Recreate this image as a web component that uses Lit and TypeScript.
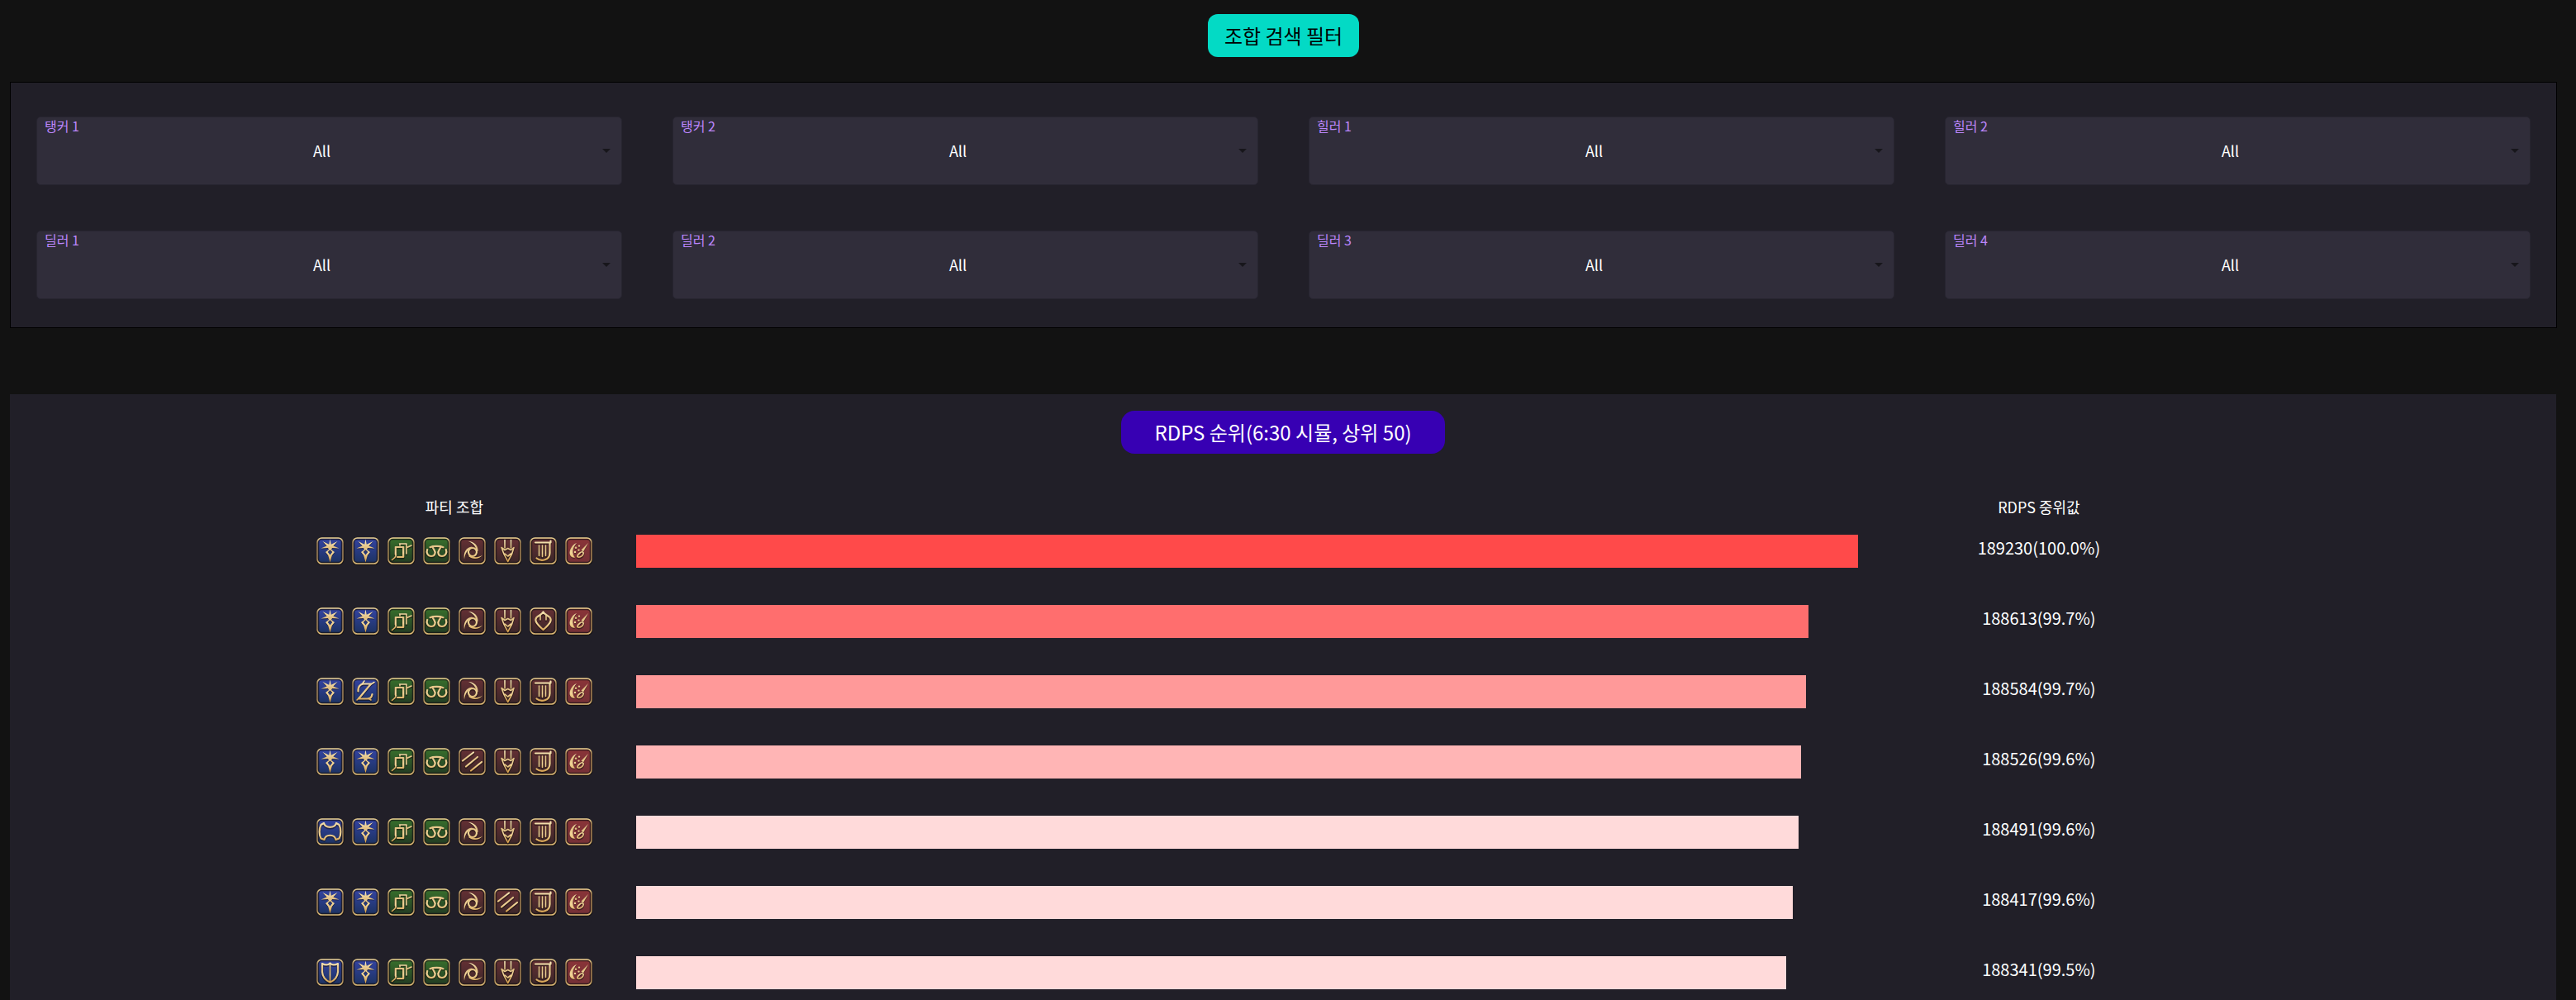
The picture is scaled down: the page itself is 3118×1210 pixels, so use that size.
import { LitElement, html, svg, css } from "lit";
import { customElement, property } from "lit/decorators.js";

type Role = "tank" | "healer" | "dps" | "caster";

const ROLE_COLORS: Record<Role, [string, string]> = {
  tank: ["#3444a4", "#1c3260"],
  healer: ["#38702c", "#223a22"],
  dps: ["#663034", "#3a2628"],
  caster: ["#8a3438", "#743036"],
};

/* Glyph shapes on a 33-unit grid: `line` is stroked, `thin` is stroked finer, `fill` is solid. */
const JOBS: Record<string, { role: Role; name: string; line?: string; thin?: string; fill?: string }> = {
  drk: {
    role: "tank",
    name: "암흑기사",
    fill: "M16.5 2.5L17.8 8.8L25.5 5L20.4 10.6L27.5 13.6L19 13L18 15L22 18L18.8 22L16.5 30.5L14.2 22L11 18L15 15L14 13L5.5 13.6L12.6 10.6L7.5 5L15.2 8.8ZM16.5 15.2L13.8 18L16.5 21.4L19.2 18Z",
  },
  gnb: {
    role: "tank",
    name: "건브레이커",
    line: "M7.5 16.5C7 11 10.5 7 15 7.5H23L8 25.5H19C22 25.5 24 23 24.5 20",
    thin: "M12 8L15 4M22 8.5L27 5.5M6 27L9 24M20 25L23 27",
  },
  war: {
    role: "tank",
    name: "전사",
    line: "M5.5 8L9 6C11 12.5 22 12.5 24 6L27.5 8C30 13 30 20 27.5 24.5L23.5 26C22 19 11 19 9.5 26L5.5 24.5C3 20 3 13 5.5 8Z",
  },
  pld: {
    role: "tank",
    name: "나이트",
    line: "M7 6V16C7.5 22 11.5 26.5 16.5 28.5C21.5 26.5 25.5 22 26 16V6C22 8 19 8 16.5 5.5C14 8 11 8 7 6Z",
    thin: "M16.5 6V27",
  },
  sch: {
    role: "healer",
    name: "현자",
    line: "M9.8 21V12H19.2V24H12",
    thin: "M14.5 8H23V20M23.5 12.5L29 10M5.5 27.5L9 24.5L10.5 21.5M15 8V10",
  },
  ast: {
    role: "healer",
    name: "점성술사",
    line: "M5.2 15C3.5 19 6 23 10 23C14.5 23 15.8 18.5 13.5 15.5L11.5 12M8.5 12.2C12 10.4 21 10.4 24.5 12.2M27.8 15C29.5 19 27 23 23 23C18.5 23 17.2 18.5 19.5 15.5L21.5 12",
  },
  nin: {
    role: "dps",
    name: "닌자",
    line: "M17 13A5 5 0 1 1 16.9 13Z",
    fill: "M12 5C19 5.5 24 10 23.5 17L21.5 17C21.5 12 18 7.5 12 5ZM29 21.5C25 27 17 27.5 12 23L13.5 21.5C18 25 24 25 29 21.5ZM7 27C5.5 19 9 12 16.5 11.5L16.5 13.5C11 14.5 8 19 7 27Z",
  },
  drg: {
    role: "dps",
    name: "용기사",
    thin: "M13 3.5V13M20.5 3.5V13M9 12.5L13 15.5L16.7 13.5L20.5 15.5L24 12.5L21.5 20.5L16.7 29.5L12 20.5ZM13 20L16.7 23L20.5 20",
  },
  mnk: {
    role: "dps",
    name: "몽크",
    line: "M5 15.5L18 5.5M9 22.5L23 11M15 27.5L28 17",
  },
  brd: {
    role: "dps",
    name: "음유시인",
    line: "M7 6.5H25.5V4.5M24.5 7V19C24.5 28 14 30 8.5 25.5",
    thin: "M11.5 10V22.5M15.5 10V23.5M19.5 10V22.5",
  },
  dnc: {
    role: "dps",
    name: "무도가",
    line: "M16.5 5.5C18 8.5 21.5 9.5 24.5 12C27.5 15.5 25 19.5 16.5 27C8 19.5 5.5 15.5 8.5 12C11.5 9.5 15 8.5 16.5 5.5Z",
    thin: "M13 9.5V15M20 9.5V15",
  },
  pct: {
    role: "caster",
    name: "픽토맨서",
    thin: "M18 19C20.5 16.5 23 18 21.8 20.8C20.3 23.8 17 25 14.8 23.6C15 21.4 16.5 20 18 19Z",
    fill: "M14 7C8 9 3.5 17.5 6.5 22.5C8 24.5 10 25 12 24.5C8 20 8.5 13 14 7ZM28 7L22 17.5L19.5 15.5ZM17 9.4A1.2 1.2 0 1 1 17 11.8A1.2 1.2 0 1 1 17 9.4ZM13 11.6A1.2 1.2 0 1 1 13 14A1.2 1.2 0 1 1 13 11.6ZM16.5 14.4A1.2 1.2 0 1 1 16.5 16.8A1.2 1.2 0 1 1 16.5 14.4ZM12 16.8A1.2 1.2 0 1 1 12 19.200A1.2 1.2 0 1 1 12 16.8Z",
  },
};

@customElement("job-icon")
export class JobIcon extends LitElement {
  static styles = css`
    :host {
      display: block;
      flex: none;
    }
    .icon {
      display: block;
      width: 34px;
      height: 34px;
    }
  `;

  @property() job = "drk";

  render() {
    const job = JOBS[this.job];
    const [top, bottom] = ROLE_COLORS[job.role];
    const glyph = (color: string, extra: number) => svg`
      ${job.fill ? svg`<path d=${job.fill} fill=${color} fill-rule="evenodd"></path>` : null}
      ${job.line ? svg`<path d=${job.line} fill="none" stroke=${color} stroke-width=${2.2 + extra} stroke-linejoin="round" stroke-linecap="round"></path>` : null}
      ${job.thin ? svg`<path d=${job.thin} fill="none" stroke=${color} stroke-width=${1.6 + extra} stroke-linejoin="round" stroke-linecap="round"></path>` : null}`;
    return html`
      <svg class="icon" viewBox="0 0 34 34" role="img" aria-label=${job.name}>
        <defs>
          <linearGradient id="bg" x1="0" y1="0" x2="0" y2="1">
            <stop offset="0" stop-color=${top}></stop>
            <stop offset="1" stop-color=${bottom}></stop>
          </linearGradient>
          <linearGradient id="frame" x1="0" y1="0" x2="0" y2="1">
            <stop offset="0" stop-color="#ecd291"></stop>
            <stop offset="0.2" stop-color="#9a7c50"></stop>
            <stop offset="0.8" stop-color="#9a7c50"></stop>
            <stop offset="1" stop-color="#e0bd78"></stop>
          </linearGradient>
          <linearGradient id="gold" gradientUnits="userSpaceOnUse" x1="0" y1="3" x2="0" y2="30">
            <stop offset="0" stop-color="#fbedc0"></stop>
            <stop offset="0.35" stop-color="#e2c083"></stop>
            <stop offset="0.6" stop-color="#f2d699"></stop>
            <stop offset="1" stop-color="#cf9744"></stop>
          </linearGradient>
        </defs>
        <rect x="0" y="1" width="33.5" height="33" rx="7" fill="#120e10"></rect>
        <rect x="1" y="1" width="31" height="31" rx="5.5" fill="url(#bg)"></rect>
        <rect x="2.5" y="2.5" width="28" height="28" rx="4" fill="none" stroke="#1a1416" stroke-opacity="0.7" stroke-width="1.5"></rect>
        <rect x="1" y="1" width="31" height="31" rx="5.5" fill="none" stroke="url(#frame)" stroke-width="1.6"></rect>
        <g opacity="0.5" transform="translate(0 1)">${glyph("#140c0a", 1)}</g>
        ${glyph("url(#gold)", 0)}
      </svg>
    `;
  }
}

const FILTERS = [
  ["탱커 1", ["All", "나이트", "전사", "암흑기사", "건브레이커"]],
  ["탱커 2", ["All", "나이트", "전사", "암흑기사", "건브레이커"]],
  ["힐러 1", ["All", "현자", "점성술사"]],
  ["힐러 2", ["All", "현자", "점성술사"]],
  ["딜러 1", ["All", "몽크", "용기사", "닌자"]],
  ["딜러 2", ["All", "몽크", "용기사", "닌자"]],
  ["딜러 3", ["All", "음유시인", "무도가"]],
  ["딜러 4", ["All", "픽토맨서"]],
] as [string, string[]][];

const RANKING = [
  { rdps: 189230, percent: "100.0", color: "#ff4a4a", party: "drk drk sch ast nin drg brd pct" },
  { rdps: 188613, percent: "99.7", color: "#ff6e6e", party: "drk drk sch ast nin drg dnc pct" },
  { rdps: 188584, percent: "99.7", color: "#ff9999", party: "drk gnb sch ast nin drg brd pct" },
  { rdps: 188526, percent: "99.6", color: "#ffb5b5", party: "drk drk sch ast mnk drg brd pct" },
  { rdps: 188491, percent: "99.6", color: "#ffdada", party: "war drk sch ast nin drg brd pct" },
  { rdps: 188417, percent: "99.6", color: "#ffdada", party: "drk drk sch ast nin mnk brd pct" },
  { rdps: 188341, percent: "99.5", color: "#ffdada", party: "pld drk sch ast nin drg brd pct" },
];

/* Bars start from this value rather than from zero, so that small gaps show. */
const BAR_BASE = 174014;
const BAR_MAX = RANKING[0].rdps;

@customElement("app-root")
export class AppRoot extends LitElement {
  static styles = css`
    :host {
      display: flex;
      flex-direction: column;
      box-sizing: border-box;
      min-height: 100vh;
      padding: 17px 23px 0 12px;
      background: #121212;
      color: #fff;
      font-family: "Noto Sans CJK KR", "Noto Sans", sans-serif;
    }
    .title {
      align-self: center;
      margin: 0;
      font-size: 24px;
      font-weight: 400;
      line-height: 52px;
    }
    .title.search {
      padding: 0 20px;
      border-radius: 12px;
      background: #03dac5;
      color: #000;
    }
    .title.rank {
      padding: 0 40px;
      border-radius: 16px;
      background: #3700b3;
    }
    .filters {
      display: grid;
      grid-template-columns: repeat(4, 1fr);
      gap: 55px 61px;
      margin-top: 30px;
      padding: 41px 31px 34px;
      border: 1px solid #000;
      background: #211f28;
    }
    .field {
      position: relative;
      display: grid;
    }
    .label {
      position: absolute;
      top: 0;
      left: 10px;
      color: #bb86fc;
      font-size: 16px;
      line-height: 22px;
      pointer-events: none;
    }
    .select {
      appearance: none;
      box-sizing: border-box;
      width: 100%;
      height: 83px;
      margin: 0;
      padding: 0 18px 2px 0;
      border: 1px solid #272530;
      border-radius: 5px;
      background: #302d3a;
      color: #fff;
      font: inherit;
      font-size: 18px;
      text-align: center;
      text-align-last: center;
    }
    .arrow {
      position: absolute;
      top: 39px;
      right: 14px;
      width: 10px;
      height: 5px;
      fill: #17161b;
      pointer-events: none;
    }
    .ranking {
      display: flex;
      flex: 1;
      flex-direction: column;
      margin: 80px 1px 0 0;
      padding-top: 20px;
      background: #211f28;
    }
    .table {
      width: 76.5%;
      margin: 51px 0 0 10.3%;
      border-collapse: collapse;
      table-layout: fixed;
    }
    .head {
      padding: 0 0 21px;
      font-size: 18px;
      font-weight: 400;
      line-height: 26px;
      text-align: center;
    }
    .party-col {
      width: 18.7%;
    }
    .value-col {
      width: 18.6%;
    }
    .cell {
      padding: 0;
      vertical-align: top;
    }
    .row + .row .cell {
      padding-top: 45px;
    }
    .party {
      display: flex;
      align-items: center;
      justify-content: center;
      gap: 9px;
      height: 40px;
      padding-left: 2px;
    }
    .bar {
      height: 40px;
    }
    .value {
      font-size: 20px;
      line-height: 32px;
      text-align: center;
    }
  `;

  render() {
    return html`
      <h1 class="title search">조합 검색 필터</h1>
      <form class="filters">
        ${FILTERS.map(
          ([label, options], i) => html`
            <div class="field">
              <label class="label" for="filter-${i}">${label}</label>
              <select class="select" id="filter-${i}">
                ${options.map((option) => html`<option>${option}</option>`)}
              </select>
              <svg class="arrow" viewBox="0 0 10 5" aria-hidden="true"><path d="M0 0H10L5 5Z"></path></svg>
            </div>
          `
        )}
      </form>
      <section class="ranking">
        <h2 class="title rank">RDPS 순위(6:30 시뮬, 상위 50)</h2>
        <table class="table">
          <thead>
            <tr>
              <th class="head party-col" scope="col">파티 조합</th>
              <td class="head"></td>
              <th class="head value-col" scope="col">RDPS 중위값</th>
            </tr>
          </thead>
          <tbody>
            ${RANKING.map(
              (row) => html`
                <tr class="row">
                  <td class="cell">
                    <div class="party">
                      ${row.party.split(" ").map((job) => html`<job-icon job=${job}></job-icon>`)}
                    </div>
                  </td>
                  <td class="cell">
                    <div
                      class="bar"
                      style="width:${((row.rdps - BAR_BASE) / (BAR_MAX - BAR_BASE)) * 100}%;background:${row.color}"
                    ></div>
                  </td>
                  <td class="cell value">${row.rdps}(${row.percent}%)</td>
                </tr>
              `
            )}
          </tbody>
        </table>
      </section>
    `;
  }
}
